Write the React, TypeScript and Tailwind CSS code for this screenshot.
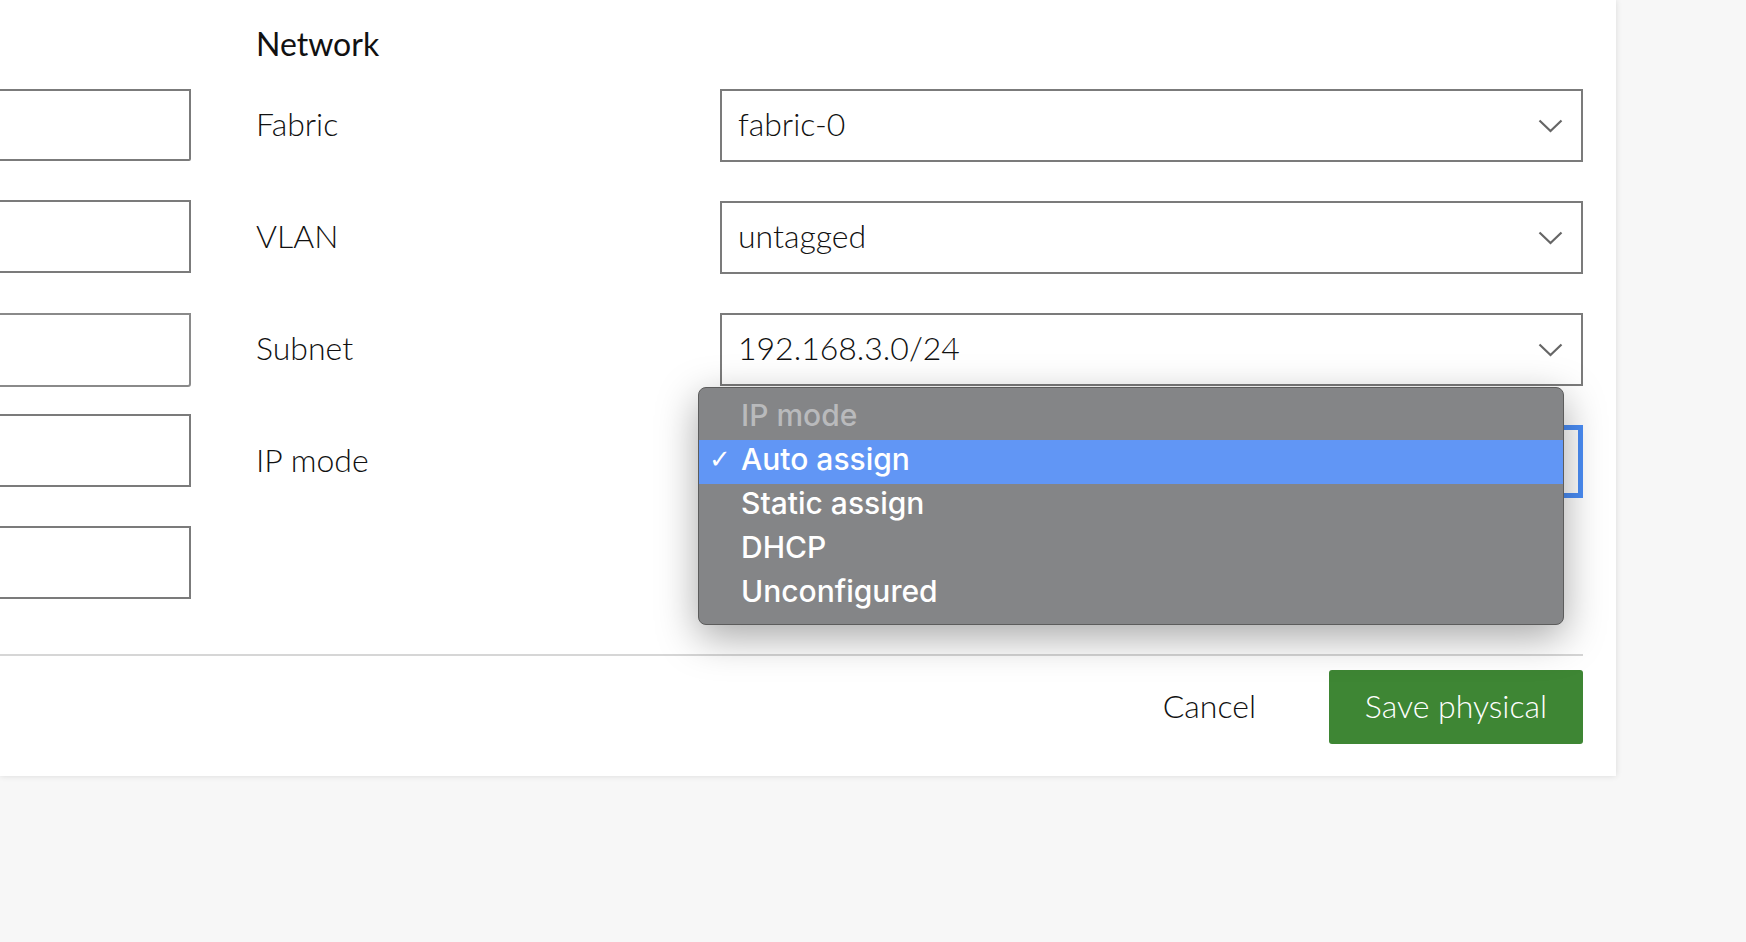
import React from 'react'

const Chevron = () => (
  <svg width="25" height="14" viewBox="0 0 25 14" fill="none">
    <path d="M1.5 1.5 L12.5 12 L23.5 1.5" stroke="#666666" strokeWidth="2.2" />
  </svg>
)

function SelectBox({ value, focused }: { value: string; focused?: boolean }) {
  return (
    <div
      className={
        focused
          ? 'flex h-[73px] w-full items-center justify-between border-[5px] border-[#4a8df6] bg-white pl-[13px] pr-[15px]'
          : 'flex h-[73px] w-full items-center justify-between border-2 border-[#7b7b7b] bg-white pl-[16px] pr-[18px]'
      }
    >
      {/* the focused select's value sits under the open menu */}
      <span className={focused ? 'invisible pb-[4px] text-[32px] font-light text-[#111]' : 'pb-[4px] text-[32px] font-light text-[#111]'}>
        {value}
      </span>
      <Chevron />
    </div>
  )
}

const rows = [
  { label: 'Fabric', value: 'fabric-0' },
  { label: 'VLAN', value: 'untagged' },
  { label: 'Subnet', value: '192.168.3.0/24' },
  { label: 'IP mode', value: 'Auto assign', focused: true },
]

const options = ['Auto assign', 'Static assign', 'DHCP', 'Unconfigured']

export default function App() {
  return (
    <div className="relative h-[942px] w-full overflow-hidden bg-[#f7f7f7] font-['Lato','Open_Sans',sans-serif]">
      <div className="flex h-[776px] w-[1616px] flex-col bg-white shadow-[0_0_6px_rgba(0,0,0,0.12)]">
        <div className="flex h-[654px]">
          {/* left column of inputs, cut off by the viewport */}
          <div className="-ml-[12px] flex w-[203px] shrink-0 flex-col">
            <div className="mt-[89px] h-[72px] rounded-br-[2px] border-2 border-[#7b7b7b]" />
            <div className="mt-[39px] h-[73px] border-2 border-[#7b7b7b]" />
            <div className="mt-[40px] h-[74px] rounded-br-[3px] border-2 border-[#8a8a8a]" />
            <div className="mt-[27px] h-[73px] border-2 border-[#7b7b7b]" />
            <div className="mt-[39px] h-[73px] border-2 border-[#7b7b7b]" />
          </div>

          <div className="ml-[65px] flex flex-1 flex-col pr-[33px]">
            <h3 className="pt-[24px] text-[32px] leading-[40px] font-normal text-[#111]">Network</h3>
            <div className="mt-[25px] flex flex-col gap-[39px]">
              {rows.map((r) => (
                <div key={r.label} className="flex items-center">
                  <span className="w-[464px] shrink-0 pb-[4px] text-[32px] font-light text-[#111]">{r.label}</span>
                  <SelectBox value={r.value} focused={r.focused} />
                </div>
              ))}
            </div>
          </div>
        </div>

        <div className="h-[2px] w-[1583px] bg-[#d6d6d6]" />

        <div className="mt-[14px] flex w-[1583px] items-center justify-end">
          <button className="mr-[73px] pb-[2px] text-[32px] font-light text-[#111]">Cancel</button>
          <button className="flex h-[74px] w-[254px] items-center justify-center rounded-[3px] bg-[#3e8634] pb-[2px] text-[32px] font-light text-white">
            Save physical
          </button>
        </div>
      </div>

      {/* open native select menu */}
      <div className="absolute top-[387px] left-[698px] w-[866px] rounded-[8px] border border-[#5c5c5c] bg-[#848587] pt-[8px] pb-[8px] font-['Inter','Roboto',sans-serif] shadow-[0_12px_40px_rgba(0,0,0,0.35)]">
        <div className="flex h-[44px] items-center pl-[42px] pb-[6px] text-[30px] font-medium text-[#b9babc]">IP mode</div>
        {options.map((o, i) => (
          <div
            key={o}
            className={
              i === 0
                ? 'flex h-[44px] items-center bg-[#6196f5] pb-[6px] text-[30px] font-medium text-white'
                : 'flex h-[44px] items-center pb-[6px] text-[30px] font-medium text-white'
            }
          >
            <span className="w-[42px] shrink-0 pl-[10px] font-['DejaVu_Sans',sans-serif] text-[26px]">{i === 0 ? '✓' : ''}</span>
            <span>{o}</span>
          </div>
        ))}
      </div>
    </div>
  )
}
